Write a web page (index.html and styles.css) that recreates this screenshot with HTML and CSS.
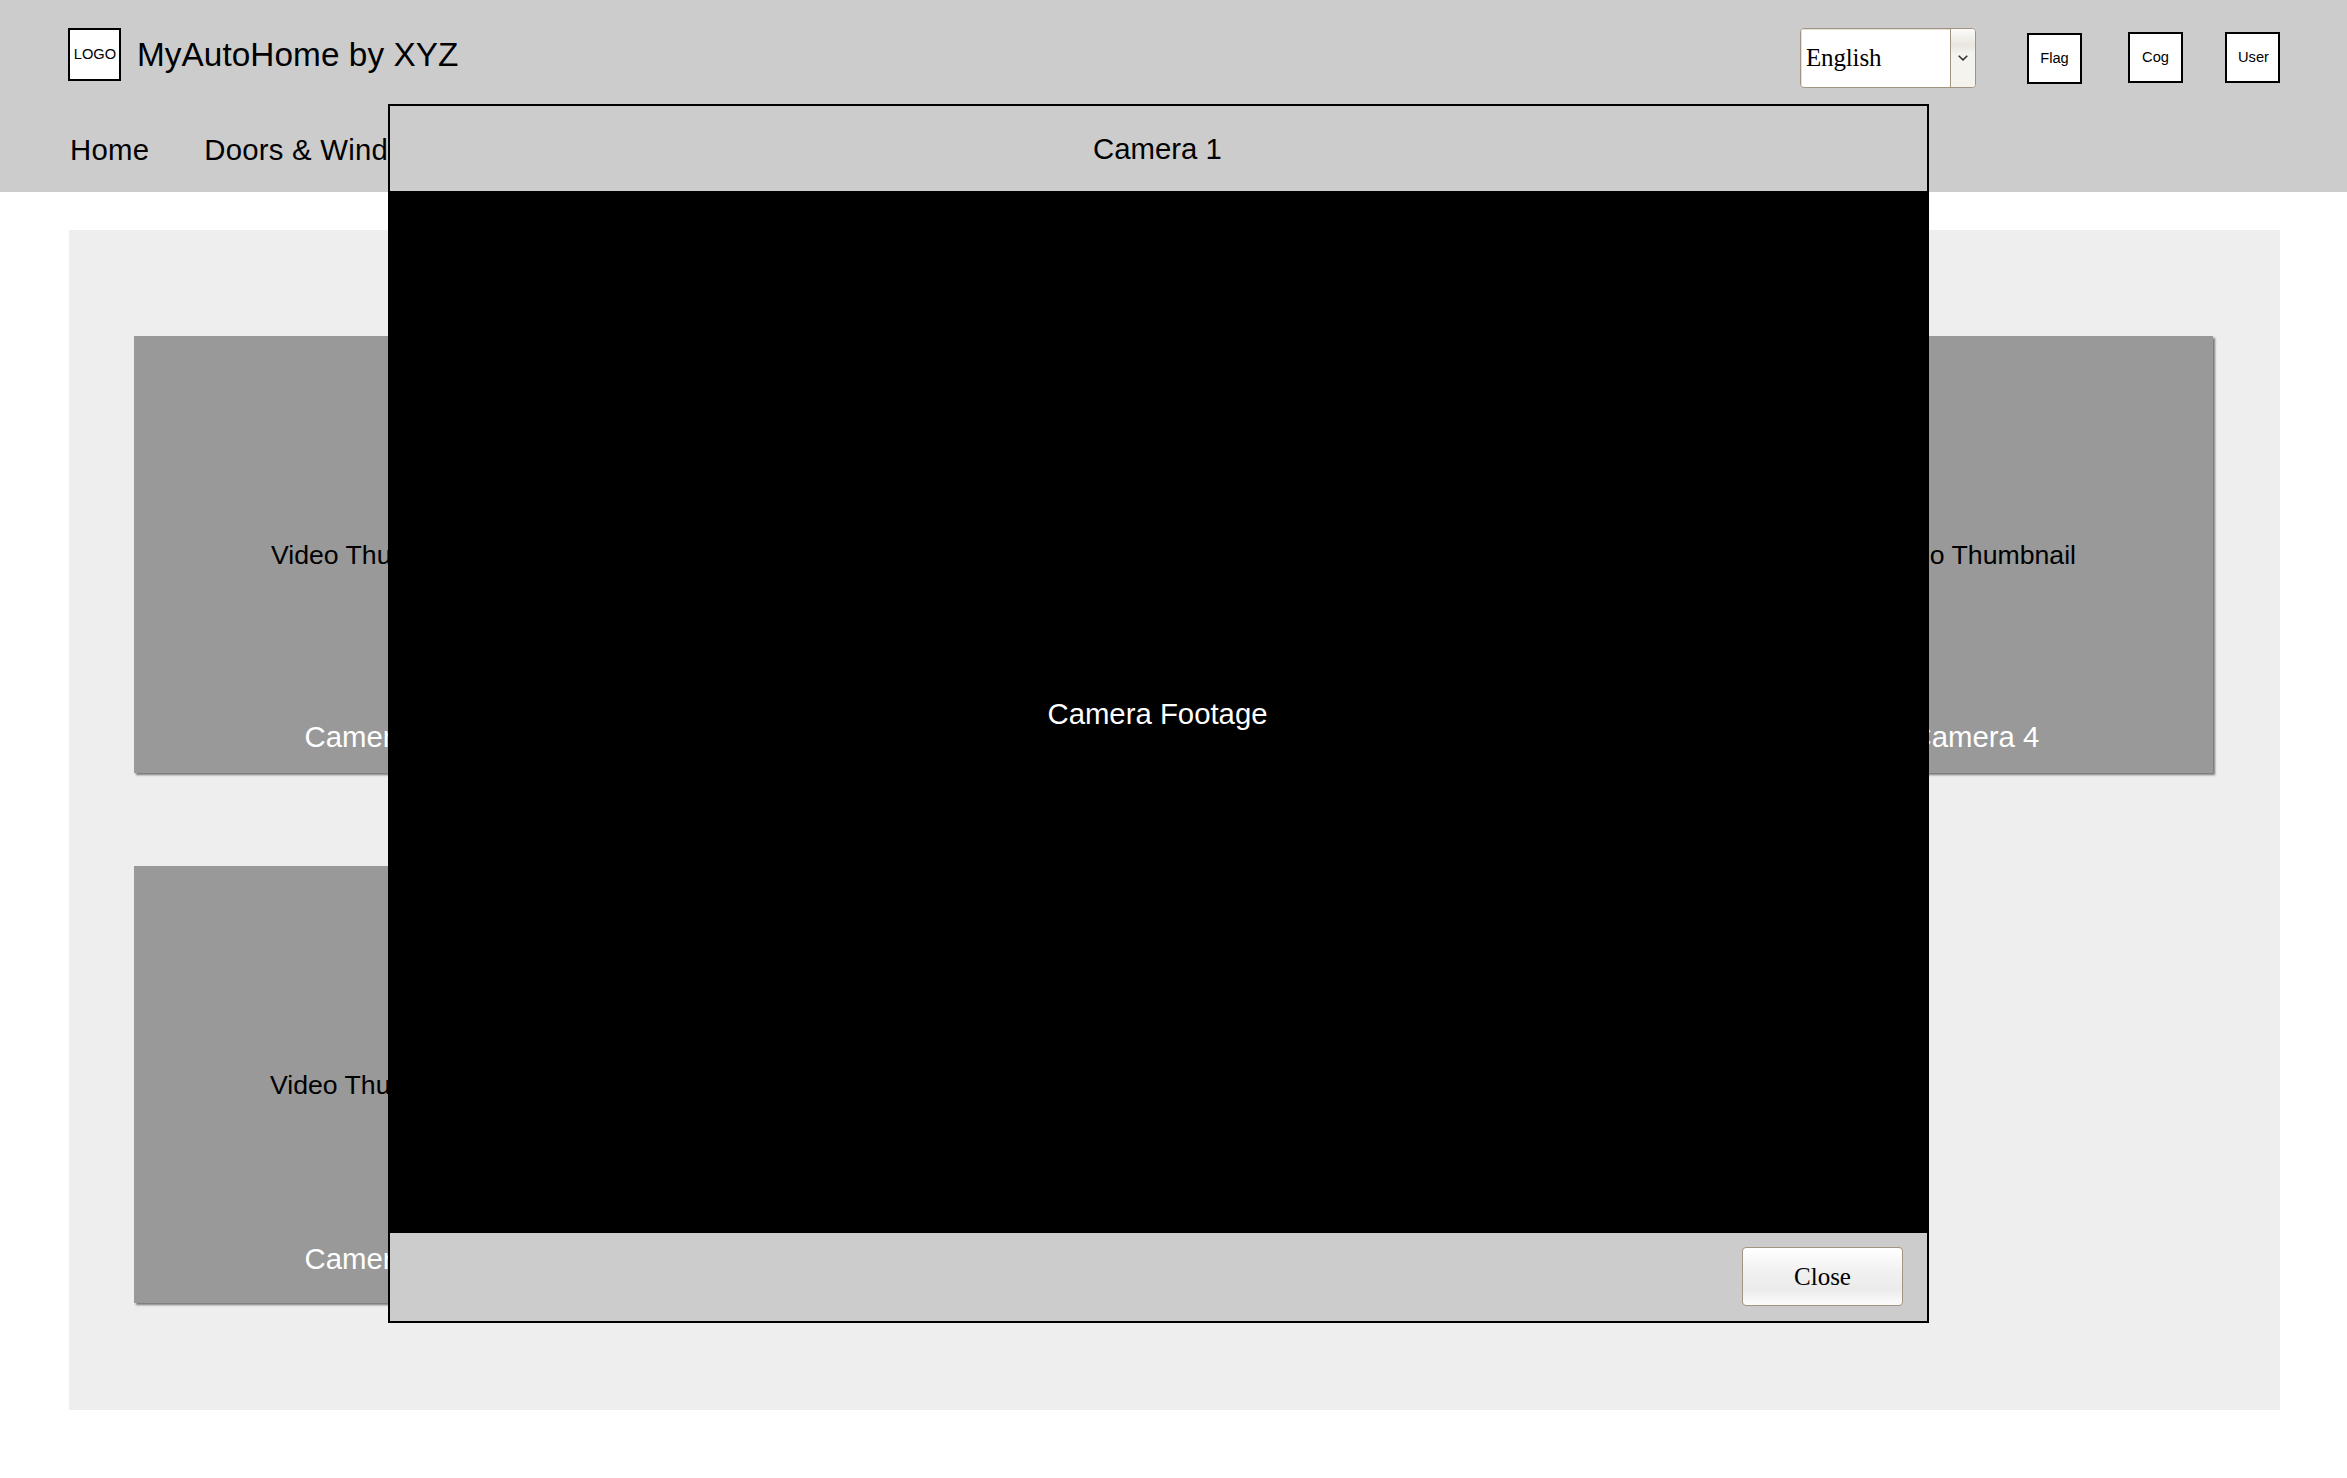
FILE: index.html
```html
<!DOCTYPE html>
<html lang="en">
<head>
<meta charset="utf-8">
<title>MyAutoHome by XYZ</title>
<link rel="stylesheet" href="styles.css">
</head>
<body>
<header class="header">
  <div class="topbar">
    <div class="logo">LOGO</div>
    <div class="brand">MyAutoHome by XYZ</div>
    <div class="language">
      <span class="language-value">English</span>
      <span class="language-arrow">
        <svg width="10" height="6" viewBox="0 0 10 6"><path d="M0.7 0.7 L5 4.9 L9.3 0.7" fill="none" stroke="#333" stroke-width="1.5"/></svg>
      </span>
    </div>
    <div class="tool tool-flag">Flag</div>
    <div class="tool tool-cog">Cog</div>
    <div class="tool tool-user">User</div>
  </div>
  <nav class="nav">
    <a class="nav-item">Home</a>
    <a class="nav-item">Doors &amp; Windows</a>
  </nav>
</header>
<main class="panel">
  <div class="card"><span class="thumb">Video Thumbnail</span><span class="name">Camera 1</span></div>
  <div class="card"><span class="thumb">Video Thumbnail</span><span class="name">Camera 2</span></div>
  <div class="card"><span class="thumb">Video Thumbnail</span><span class="name">Camera 3</span></div>
  <div class="card"><span class="thumb">Video Thumbnail</span><span class="name">Camera 4</span></div>
  <div class="card card-low"><span class="thumb">Video Thumbnail</span><span class="name">Camera 5</span></div>
</main>
<section class="modal">
  <div class="modal-title">Camera 1</div>
  <div class="modal-video">Camera Footage</div>
  <div class="modal-footer"><button class="close">Close</button></div>
</section>
</body>
</html>
```

FILE: styles.css
```css
* { box-sizing: border-box; }
body {
  margin: 0;
  height: 1478px;
  background: #fff;
  color: #000;
  font-family: "Liberation Sans", Arial, sans-serif;
  overflow: hidden;
}
.header { height: 192px; background: #ccc; }
.topbar {
  display: flex;
  align-items: flex-start;
  height: 133px;
  padding: 28px 67px 0 68px;
}
.logo {
  width: 53px;
  height: 53px;
  padding-left: 1px;
  border: 2px solid #000;
  background: #fff;
  font-size: 14.67px;
  line-height: 48px;
  text-align: center;
  white-space: nowrap;
}
.brand {
  margin-left: 16px;
  font-size: 33.33px;
  line-height: 54px;
  letter-spacing: 0.06px;
}
.language {
  display: flex;
  width: 176px;
  height: 60px;
  margin-left: auto;
  border: 1px solid #a39482;
  border-radius: 4px;
  background: #fff;
  overflow: hidden;
  font-family: "Liberation Serif", "Times New Roman", serif;
  font-size: 25px;
  letter-spacing: -0.15px;
}
.language-value {
  flex: 1;
  padding-left: 5px;
  line-height: 58px;
  box-shadow: inset 1px 1px 0 #e4e0da;
}
.language-arrow {
  display: flex;
  align-items: center;
  justify-content: center;
  width: 25px;
  border-left: 1px solid #a39482;
  background: linear-gradient(#fcfbfa 0, #e9e6df 28%, #f4f3ee 42%, #f4f3ee 100%);
}
.tool {
  width: 55px;
  height: 51px;
  margin-top: 4px;
  border: 2px solid #000;
  background: #fff;
  font-size: 14.67px;
  line-height: 46px;
  text-align: center;
}
.tool-flag { margin-top: 5px; margin-left: 51px; }
.tool-cog { margin-left: 46px; }
.tool-user { margin-left: 42px; padding-left: 2px; }
.nav {
  display: flex;
  gap: 55px;
  padding-left: 70px;
  font-size: 29.33px;
  line-height: 33px;
  letter-spacing: 0.25px;
}
.panel {
  display: grid;
  grid-template-columns: repeat(4, 473px);
  grid-auto-rows: 437px;
  justify-content: space-between;
  row-gap: 93px;
  width: 2211px;
  height: 1180px;
  margin: 38px 0 0 69px;
  padding: 106px 67px 0 65px;
  background: #eee;
}
.card {
  display: flex;
  flex-direction: column;
  justify-content: space-between;
  padding: 203px 0 20px;
  background: #999;
  box-shadow: 2px 2px 2px rgba(0, 0, 0, .5);
  text-align: center;
}
.card-low { padding-bottom: 28px; }
.thumb { font-size: 26.67px; line-height: 32px; }
.card-low .thumb { padding-right: 2px; }
.name { padding-right: 3px; color: #fff; font-size: 29.33px; line-height: 33px; }
.modal {
  position: absolute;
  left: 388px;
  top: 104px;
  display: flex;
  flex-direction: column;
  width: 1541px;
  height: 1219px;
  border: 2px solid #000;
  background: #ccc;
  text-align: center;
  font-size: 29.33px;
}
.modal-title { height: 85px; padding-right: 2px; line-height: 85px; }
.modal-video {
  display: flex;
  flex: 1;
  align-items: center;
  justify-content: center;
  padding: 3px 2px 0 0;
  background: #000;
  color: #fff;
  line-height: 33px;
}
.modal-footer {
  display: flex;
  flex: none;
  justify-content: flex-end;
  height: 88px;
  padding: 14px 24px 0 0;
}
.close {
  width: 161px;
  height: 59px;
  padding: 0;
  border: 1px solid #a39482;
  border-radius: 4px;
  background: linear-gradient(#fff 0, #f0f0f0 45%, #ebebeb 72%, #fcfcfc 100%);
  color: #000;
  font-family: "Liberation Serif", "Times New Roman", serif;
  font-size: 25px;
}
```
